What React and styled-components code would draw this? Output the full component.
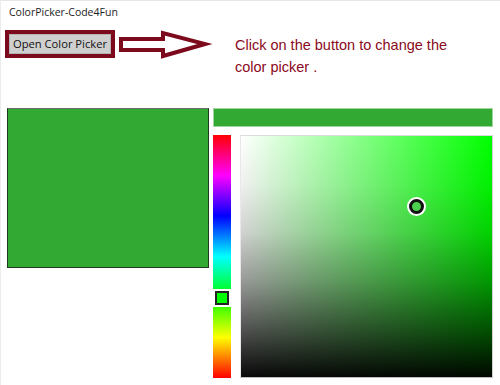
import React from "react";
import styled, { createGlobalStyle } from "styled-components";

const Global = createGlobalStyle`
  html, body { margin: 0; padding: 0; background: #fff; }
  * { box-sizing: border-box; }
`;

const GREEN = "#32a932";
const MAROON = "#7d0a1c";

const Window = styled.div`
  width: 500px;
  height: 385px;
  border-left: 1px solid #ececec;
  border-top: 1px solid #e6e6e6;
  background: #fff;
  overflow: hidden;
  display: flex;
  flex-direction: column;
`;

const Title = styled.div`
  height: 29px;
  padding: 4px 0 0 8px;
  font-family: "Open Sans", "Noto Sans", sans-serif;
  font-size: 10.5px;
  line-height: 15px;
  color: #1e1e1e;
`;

const Toolbar = styled.div`
  height: 78px;
  display: flex;
  align-items: flex-start;
  padding-left: 4px;
`;

const ButtonFrame = styled.div`
  width: 110px;
  height: 28px;
  border: 4px solid ${MAROON};
  display: flex;
`;

const PickerButton = styled.button`
  flex: 1;
  margin: 0;
  padding: 0;
  border: 1px solid #b4b4b4;
  background: #cfcfcf;
  font-family: "Open Sans", "Noto Sans", sans-serif;
  font-size: 11.2px;
  color: #111;
  line-height: 18px;
  cursor: pointer;
`;

const Arrow = styled.svg`
  width: 96px;
  height: 32px;
  margin-left: 2px;
  flex: none;
`;

const Hint = styled.div`
  margin-top: 4px;
  margin-left: 22px;
  width: 240px;
  font-family: "Liberation Sans", Arial, sans-serif;
  font-size: 14.5px;
  line-height: 22px;
  color: #8a0a22;
`;

const Main = styled.div`
  display: flex;
  gap: 4px;
  padding-left: 6px;
  align-items: flex-start;
`;

const Preview = styled.div`
  width: 202px;
  height: 160px;
  background: ${GREEN};
  border: 1px solid #1f3a1f;
  border-top-color: #6c6c6c;
`;

const RightColumn = styled.div`
  width: 280px;
  display: flex;
  flex-direction: column;
  gap: 8px;
`;

const ColorBar = styled.div`
  height: 19px;
  background: ${GREEN};
  border: 1px solid #9fd59f;
`;

const PickerRow = styled.div`
  display: flex;
  gap: 9px;
  height: 243px;
`;

const HueBar = styled.div`
  position: relative;
  width: 18px;
  height: 100%;
  background: linear-gradient(
    to bottom,
    #ff0000 0%,
    #ff00ff 16.67%,
    #0000ff 33.33%,
    #00ffff 50%,
    #00ff00 66.67%,
    #ffff00 83.33%,
    #ff0000 100%
  );
`;

const HueGap = styled.div`
  position: absolute;
  left: 0;
  right: 0;
  top: 154px;
  height: 18px;
  background: #fff;
  display: flex;
  align-items: center;
  justify-content: center;
`;

const HueThumb = styled.div`
  width: 14px;
  height: 14px;
  border: 2px solid #222;
  background: #00ff00;
  margin-left: -1px;
`;

const SVSquare = styled.div`
  position: relative;
  width: 253px;
  height: 100%;
  background:
    linear-gradient(
      to bottom,
      rgba(0, 0, 0, 0) 0%,
      rgba(0, 0, 0, 0.06) 20%,
      rgba(0, 0, 0, 0.18) 40%,
      rgba(0, 0, 0, 0.4) 60%,
      rgba(0, 0, 0, 0.68) 80%,
      rgba(0, 0, 0, 0.97) 100%
    ),
    linear-gradient(to right, #fff 0%, #00ff00 100%);
  border-top: 1px solid #dcdcdc;
  border-right: 1px solid #d0d0d0;
  border-bottom: 1px solid #bdbdbd;
  border-left: 1px solid #e8e8e8;
`;

const SVThumb = styled.div`
  position: absolute;
  left: 168px;
  top: 63px;
  width: 15px;
  height: 15px;
  border-radius: 50%;
  border: 3px solid #111;
  background: #4ccf4c;
  box-shadow: 0 0 0 2px #fff;
`;

export default function App() {
  return (
    <>
      <Global />
      <Window>
        <Title>ColorPicker-Code4Fun</Title>
        <Toolbar>
          <ButtonFrame>
            <PickerButton>Open Color Picker</PickerButton>
          </ButtonFrame>
          <Arrow viewBox="0 0 96 32">
            <polygon
              points="4,9 46,9 46,3 88,14 46,26 46,20 4,20"
              fill="#fff"
              stroke={MAROON}
              strokeWidth="4"
              strokeLinejoin="miter"
            />
          </Arrow>
          <Hint>Click on the button to change the color picker .</Hint>
        </Toolbar>
        <Main>
          <Preview />
          <RightColumn>
            <ColorBar />
            <PickerRow>
              <HueBar>
                <HueGap>
                  <HueThumb />
                </HueGap>
              </HueBar>
              <SVSquare>
                <SVThumb />
              </SVSquare>
            </PickerRow>
          </RightColumn>
        </Main>
      </Window>
    </>
  );
}
